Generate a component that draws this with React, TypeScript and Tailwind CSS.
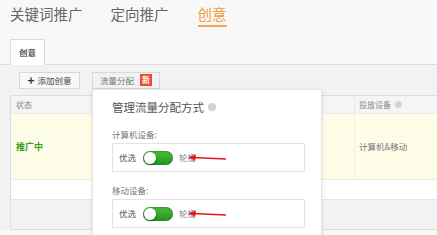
import React from "react";

function Toggle() {
    return (
        <div className="relative h-[14px] w-[30px] rounded-full bg-gradient-to-b from-[#4cc43c] to-[#1f8f1f] shadow-[inset_0_1px_2px_rgba(0,0,0,0.3)]">
            <div className="absolute left-[1px] top-[1px] h-[12px] w-[12px] rounded-full bg-white shadow-[0_1px_2px_rgba(0,0,0,0.4)]" />
        </div>
    );
}

function Arrow() {
    return (
        <svg width="38" height="8" viewBox="0 0 38 8" className="-ml-[8px] shrink-0">
            <line x1="4" y1="3.5" x2="38" y2="5" stroke="#e8141a" strokeWidth="1.6" />
            <path d="M0 3.3 L8 0.5 L7 6.5 Z" fill="#e8141a" />
        </svg>
    );
}

function DeviceBox({label}: {label: string}) {
    return (
        <div className="mt-[13px]">
            <div className="pl-[19px] text-[8.5px] leading-[10px] text-[#777]">{label}</div>
            <div className="ml-[19px] mt-[4px] flex h-[29px] w-[193px] items-center border border-[#e3e3e3] bg-white pl-[6px]">
                <span className="text-[8.5px] text-[#555]">优选</span>
                <div className="ml-[7px]">
                    <Toggle />
                </div>
                <div className="ml-[6px] flex items-center">
                    <span className="whitespace-nowrap text-[8.5px] text-[#888]">轮播</span>
                    <Arrow />
                </div>
            </div>
        </div>
    );
}

export default function App() {
    return (
        <div className="relative h-[235px] w-[437px] overflow-hidden bg-[#f8f8f8] font-['Noto_Sans_CJK_SC',sans-serif]">
            <div className="flex h-[39px] items-start pl-[10px] pt-[4px] text-[14.5px] leading-[20px]">
                <span className="text-[#666]">关键词推广</span>
                <span className="ml-[28px] text-[#666]">定向推广</span>
                <span className="ml-[29px] border-b-2 border-[#f6a75a] pb-[1px] text-[#f39a3c]">创意</span>
            </div>

            <div className="flex h-[26px] items-end border-b border-[#dcdcdc] pl-[10px]">
                <div className="-mb-px flex h-[26px] w-[35px] items-center justify-center border border-b-0 border-[#dcdcdc] bg-white text-[8.5px] font-bold text-[#555]">
                    创意
                </div>
            </div>

            <div className="bg-[#f2f2f2]">
                <div className="flex h-[30px] items-center gap-[12px] pl-[19px]">
                    <div className="flex h-[17px] w-[61px] items-center justify-center gap-[3px] border border-[#d8d8d8] bg-[#f8f8f8]">
                        <span className="text-[12px] font-bold leading-none text-[#333]">+</span>
                        <span className="text-[8.5px] text-[#444]">添加创意</span>
                    </div>
                    <div className="flex h-[17px] w-[68px] items-center gap-[6px] border border-[#d8d8d8] bg-[#f2f2f2] pl-[7px]">
                        <span className="text-[8.5px] text-[#777]">流量分配</span>
                        <span className="flex h-[12px] w-[12px] items-center justify-center bg-[#ee4b2b] text-[8px] font-bold text-white">新</span>
                    </div>
                </div>

                <div className="ml-[10px] w-[440px] border border-[#dddddd] bg-white">
                    <div className="flex h-[17px] bg-[#f5f5f5] text-[8px] text-[#888]">
                        <div className="flex w-[343px] items-center pl-[5px]">状态</div>
                        <div className="flex items-center gap-[4px] border-l border-[#e5e5e5] pl-[4px]">
                            投放设备
                            <span className="h-[7px] w-[7px] rounded-full bg-[#d5d5d5]" />
                        </div>
                    </div>
                    <div className="flex h-[66px] border-t border-[#ececec] bg-[#fefee8]">
                        <div className="flex w-[343px] items-center pl-[5px] text-[9px] font-bold text-[#3c9a1e]">推广中</div>
                        <div className="flex items-center border-l border-[#f0f0dc] pl-[4px] text-[8.5px] text-[#777]">计算机&amp;移动</div>
                    </div>
                    <div className="h-[20px] border-t border-[#ececec] bg-white" />
                    <div className="h-[30px] border-t border-[#e5e5e5] bg-[#f3f3f3]" />
                </div>
            </div>

            <div className="absolute left-[92px] top-[89px] h-[160px] w-[230px] border border-[#e6e6e6] bg-white shadow-[0_1px_4px_rgba(0,0,0,0.12)]">
                <div className="flex items-center pl-[19px] pt-[8px]">
                    <span className="text-[11.5px] leading-[18px] text-[#555]">管理流量分配方式</span>
                    <span className="ml-[4px] h-[8px] w-[8px] rounded-full bg-[#d2d2d2]" />
                </div>
                <DeviceBox label="计算机设备:" />
                <DeviceBox label="移动设备:" />
            </div>
        </div>
    );
}
